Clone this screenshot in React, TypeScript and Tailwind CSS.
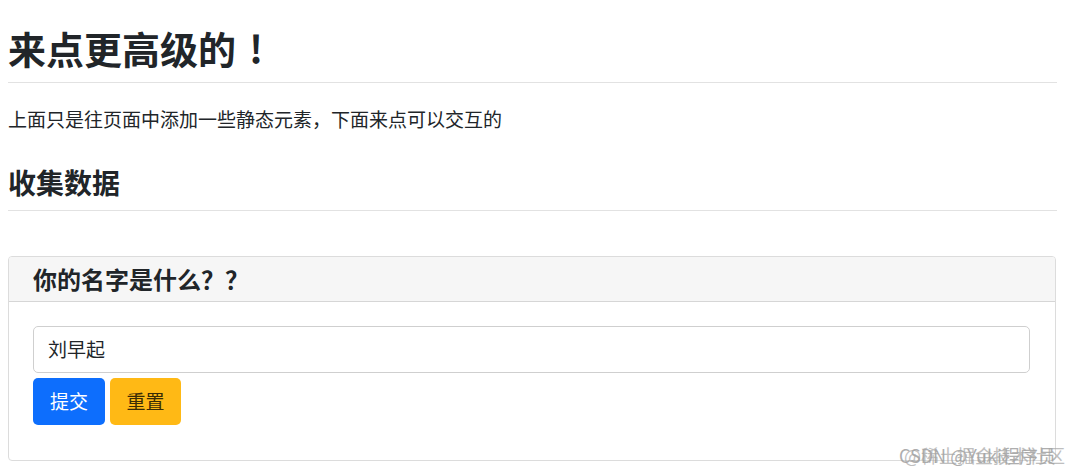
export default function App() {
  const font = { fontFamily: '"Noto Sans CJK SC", "Noto Sans", sans-serif' };
  return (
    <div className="relative w-[1080px] h-[474px] bg-white overflow-hidden text-[#212529]" style={font}>
      <div className="ml-2 w-[1049px] flex flex-col">
        <h1 className="mt-[25px] text-[38px] leading-[46px] font-bold">
          来点更高级的<span className="ml-[13px]">!</span>
        </h1>
        <div className="mt-[11px] h-px bg-[#e2e2e2]" />
        <p className="mt-[22px] text-[19px] leading-[28px]">上面只是往页面中添加一些静态元素，下面来点可以交互的</p>
        <h2 className="mt-[32px] text-[28px] leading-[34px] font-bold">收集数据</h2>
        <div className="mt-[11px] h-px bg-[#e2e2e2]" />
        <div className="mt-[45px] w-[1048px] h-[205px] border border-[#dcdcdc] rounded-[4px] flex flex-col overflow-hidden">
          <div className="h-[45px] shrink-0 bg-[#f6f6f6] border-b border-[#d6d6d6] flex items-center pl-6">
            <span className="text-[24px] leading-[28px] font-bold">你的名字是什么？？</span>
          </div>
          <div className="pt-[24px] pl-6 pr-[25px] flex flex-col">
            <div className="h-[47px] border border-[#cfcfcf] rounded-[5px] flex items-center pl-[14px] text-[19px]">刘早起</div>
            <div className="mt-[5px] flex gap-[5px]">
              <button className="w-[72px] h-[47px] rounded-[5px] bg-[#0d6efd] text-white text-[19px]">提交</button>
              <button className="w-[71px] h-[47px] rounded-[5px] bg-[#ffb915] text-[#3a2c05] text-[19px]">重置</button>
            </div>
          </div>
        </div>
      </div>
      <span className="absolute left-[899px] top-[444px] text-[18px] leading-[22px] whitespace-nowrap text-[#9a9a9a] opacity-80">CSDN @Yuki程序员</span>
      <span className="absolute left-[904px] top-[444px] text-[18px] leading-[22px] whitespace-nowrap text-[#a5a5a5] opacity-70">@稀土掘金技术社区</span>
    </div>
  );
}
